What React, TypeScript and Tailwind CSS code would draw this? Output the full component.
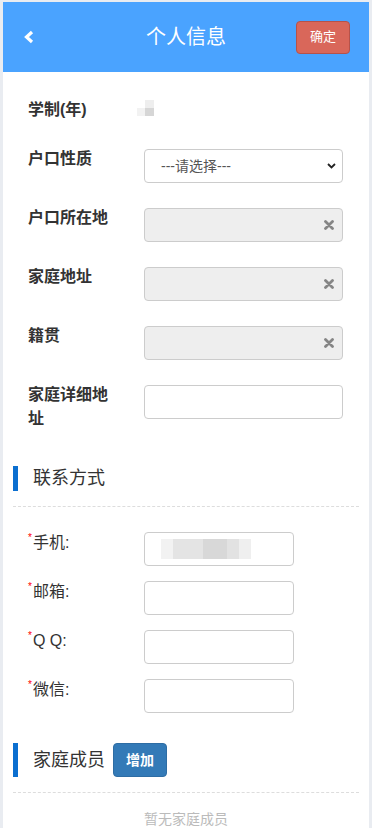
import type { ReactNode } from 'react';

const font = { fontFamily: '"Liberation Sans", "Noto Sans CJK SC", sans-serif' };

function ClearIcon() {
  return (
    <svg width="10" height="10" viewBox="0 0 10 10">
      <path d="M1.5 1.5 L8.5 8.5 M8.5 1.5 L1.5 8.5" stroke="#858585" strokeWidth="2.8" strokeLinecap="round" />
    </svg>
  );
}

function BoldRow({ label, children }: { label: string; children: ReactNode }) {
  return (
    <div className="flex items-start">
      <div className="w-[88px] -mt-[2px] text-[16px] font-bold leading-[24px] text-[#333]">{label}</div>
      <div className="ml-[28px]">{children}</div>
    </div>
  );
}

function ContactRow({ label, children }: { label: string; children?: ReactNode }) {
  return (
    <div className="flex items-start">
      <div className="w-[116px] -mt-[1px] flex items-start text-[16px] leading-[24px] text-[#333]">
        <span className="text-[10px] leading-[14px] text-[#f00] mr-px">*</span>
        <span>{label}</span>
      </div>
      <div className="w-[150px] h-[34px] rounded-[4px] border border-[#ccc] bg-white flex items-center px-[16px]">
        {children}
      </div>
    </div>
  );
}

function ReadonlyBox() {
  return (
    <div className="w-[199px] h-[34px] rounded-[4px] border border-[#ccc] bg-[#eee] flex items-center justify-end pr-[8px]">
      <ClearIcon />
    </div>
  );
}

export default function App() {
  return (
    <div className="min-h-screen bg-[#e9ecf1] pt-[2px] px-[3px]" style={font}>
      <div className="bg-white min-h-[826px]">
        {/* 顶部 */}
        <div className="h-[70px] bg-[#4aa3ff] grid grid-cols-[1fr_auto_1fr] items-center pl-[19px] pr-[19px]">
          <svg width="14" height="14" viewBox="0 0 14 14">
            <path d="M10 2 L4.5 7 L10 12" fill="none" stroke="white" strokeWidth="3.2" strokeLinejoin="miter" />
          </svg>
          <div className="text-white text-[20px] leading-none">个人信息</div>
          <div className="flex justify-end">
            <button className="w-[54px] h-[33px] rounded-[4px] bg-[#d9675a] border border-[#b6524a] text-white text-[13px]">
              确定
            </button>
          </div>
        </div>

        {/* 基本信息 */}
        <div className="pl-[25px] pt-[26px]">
          <div className="flex items-start h-[24px]">
            <div className="w-[88px] text-[16px] font-bold leading-[24px] text-[#333]">学制(年)</div>
            <div className="ml-[21px] mt-[2px] flex">
              <div className="w-[8px] h-[16px] flex flex-col">
                <div className="h-[8px] bg-white" />
                <div className="h-[8px] bg-[#f2f2f2]" />
              </div>
              <div className="w-[9px] h-[16px] flex flex-col">
                <div className="h-[8px] bg-[#eeeeee]" />
                <div className="h-[8px] bg-[#d6d6d6]" />
              </div>
            </div>
          </div>

          <div className="mt-[27px] flex flex-col gap-[25px]">
            <BoldRow label="户口性质">
              <div className="w-[199px] h-[34px] rounded-[4px] border border-[#ccc] bg-white flex items-center justify-between pl-[16px] pr-[6px]">
                <span className="text-[14px] text-[#555]">---请选择---</span>
                <svg width="9" height="6" viewBox="0 0 9 6">
                  <path d="M1 1 L4.5 4.5 L8 1" fill="none" stroke="#222" strokeWidth="1.8" />
                </svg>
              </div>
            </BoldRow>
            <BoldRow label="户口所在地">
              <ReadonlyBox />
            </BoldRow>
            <BoldRow label="家庭地址">
              <ReadonlyBox />
            </BoldRow>
            <BoldRow label="籍贯">
              <ReadonlyBox />
            </BoldRow>
            <BoldRow label="家庭详细地址">
              <div className="w-[199px] h-[34px] rounded-[4px] border border-[#ccc] bg-white" />
            </BoldRow>
          </div>
        </div>

        {/* 联系方式 */}
        <div className="px-[10px] mt-[35px]">
          <div className="flex items-center h-[25px]">
            <div className="w-[5px] h-[25px] bg-[#0b6fd0]" />
            <div className="ml-[15px] text-[18px] text-[#333]">联系方式</div>
          </div>
          <div className="mt-[15px] border-t border-dashed border-[#ddd]" />
          <div className="pl-[15px] pt-[25px] flex flex-col gap-[15px]">
            <ContactRow label="手机:">
              <div className="flex">
                <div className="w-[12px] h-[20px] bg-[#f2f2f2]" />
                <div className="w-[30px] h-[20px] bg-[#e4e4e4]" />
                <div className="w-[24px] h-[20px] bg-[#d8d8d8]" />
                <div className="w-[12px] h-[20px] bg-[#e2e2e2]" />
                <div className="w-[12px] h-[20px] bg-[#efefef]" />
              </div>
            </ContactRow>
            <ContactRow label="邮箱:" />
            <ContactRow label="Q Q:" />
            <ContactRow label="微信:" />
          </div>
        </div>

        {/* 家庭成员 */}
        <div className="px-[10px] mt-[30px]">
          <div className="flex items-center h-[34px]">
            <div className="w-[5px] h-[34px] bg-[#0b6fd0]" />
            <div className="ml-[15px] text-[18px] text-[#333]">家庭成员</div>
            <button className="ml-[8px] w-[54px] h-[34px] rounded-[4px] bg-[#337ab7] border border-[#2e6da4] text-white text-[14px] font-bold">
              增加
            </button>
          </div>
          <div className="mt-[15px] border-t border-dashed border-[#ddd]" />
          <div className="pt-[16px] text-center text-[14px] text-[#bbb]">暂无家庭成员</div>
        </div>
      </div>
    </div>
  );
}
